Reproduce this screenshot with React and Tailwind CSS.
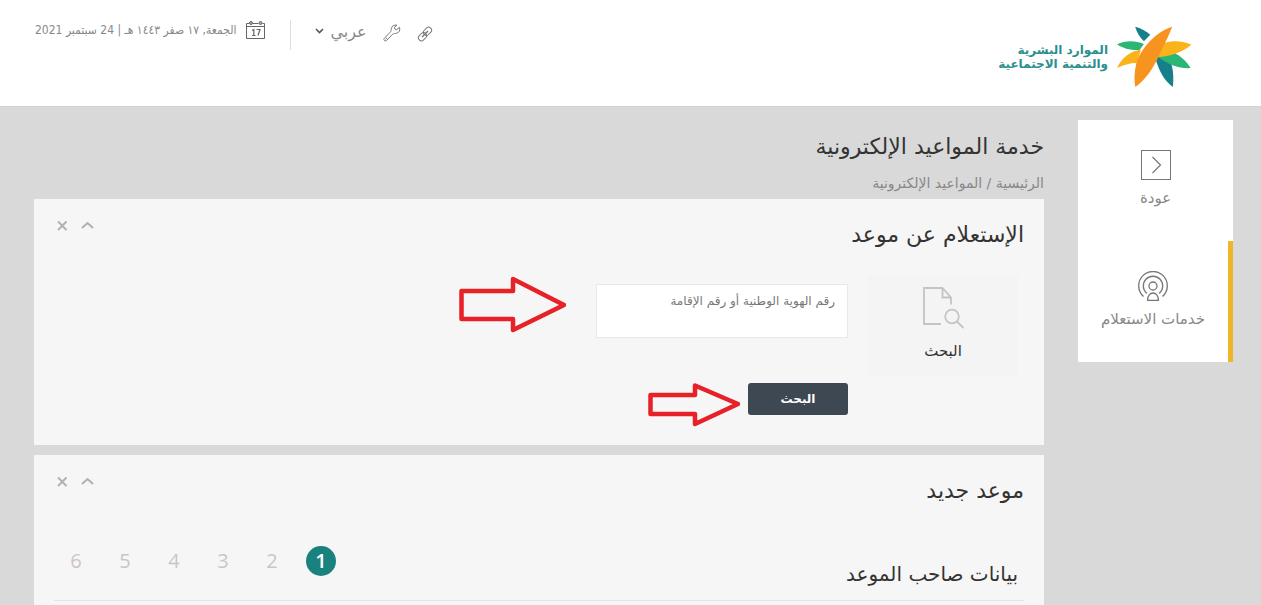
import { useState } from 'react';

const steps = [1, 2, 3, 4, 5, 6];

function Logo() {
	return (
		<a
			href="#home"
			className="flex items-center gap-2 text-xs leading-[14px] font-bold text-[#2b8f8f]"
		>
			<svg viewBox="14 12 226 184" className="h-[62px] w-[76px]" aria-hidden="true">
				<path d="M71 14C88 18 104 27 116 38L97 57C85 46 76 31 71 14Z" fill="#16808a" />
				<path d="M160 88C180 112 188 150 183 193C158 176 142 146 131 108Z" fill="#16808a" />
				<path d="M17 66C42 54 72 55 97 65L84 83C58 84 35 79 17 66Z" fill="#2cb673" />
				<path d="M172 86C200 94 222 114 236 137C202 139 168 126 138 103Z" fill="#2cb673" />
				<path d="M17 137C30 108 55 87 88 82L76 122C54 122 35 128 17 137Z" fill="#fbb31c" />
				<path d="M238 67C212 55 182 54 156 62L130 105C172 103 212 92 238 67Z" fill="#fbb31c" />
				<path d="M181 14C136 28 84 78 73 130C68 155 68 178 72 193C102 172 126 136 141 102C156 68 171 42 181 14Z" fill="#f7941f" />
			</svg>
			<span>
				الموارد البشرية
				<br />
				والتنمية الاجتماعية
			</span>
		</a>
	);
}

function CalendarIcon() {
	return (
		<svg viewBox="0 0 20 20" className="h-5 w-5" fill="none" stroke="#666" aria-hidden="true">
			<path d="M3 3.500H.5V18.500H18.500V3.500H16.500M7 3.500H12.500M.5 6.500H18.500" />
			<circle cx="5" cy="3" r="1.500" fill="#aaa" />
			<circle cx="14.500" cy="3" r="1.500" fill="#aaa" />
			<path d="M6 10.500L7.800 9.500V15.500M6 15.500H9.500M10.500 9.500H14L12 15.500" strokeWidth="1.200" />
		</svg>
	);
}

function WrenchIcon() {
	return (
		<svg viewBox="0 0 18 18" className="h-[18px] w-[18px]" fill="none" stroke="#777" strokeLinejoin="round" aria-hidden="true">
			<path d="M16.500 3.300L13.500 5.800L11.800 5L11.500 3.300L14 1.200C11.500.6 8.600 1.900 8.300 4.600C8.200 6.400 8.200 7 7.200 8.200L1.200 14.500C.1 15.800 1.900 17.800 3.300 16.700L9.500 10.300C10.700 9.300 12 9.600 13.500 9.300C16.200 8.600 17.400 6 16.500 3.300Z" />
			<path d="M2.700 15.200L4 13.900" />
		</svg>
	);
}

function LinkIcon() {
	return (
		<svg viewBox="0 0 16 16" className="h-4 w-4" fill="none" stroke="#777" aria-hidden="true">
			<rect x="6" y="2.300" width="9" height="6" rx="3" transform="rotate(-45 10.500 5.300)" />
			<rect x="1" y="7.700" width="9" height="6" rx="3" transform="rotate(-45 5.500 10.700)" />
			<path d="M5 11L11 5" strokeWidth="1.500" />
		</svg>
	);
}

function BackIcon() {
	return (
		<svg viewBox="0 0 30 30" className="h-[30px] w-[30px]" fill="none" stroke="#777" aria-hidden="true">
			<rect x=".5" y=".5" width="29" height="29" />
			<path d="M11.500 7L19.500 15L11.500 23" strokeWidth="1.200" />
		</svg>
	);
}

function InquiryIcon() {
	return (
		<svg viewBox="0 0 30 30" className="h-[30px] w-[30px]" fill="none" stroke="#777" strokeWidth="1.300" aria-hidden="true">
			<path d="M5.500 25.500A14.300 14.300 0 1 1 24.500 25.500" />
			<path d="M8.800 22.400A9.700 9.700 0 1 1 21.200 22.400" />
			<circle cx="15" cy="15" r="4" />
			<path d="M9.500 29.400C9.500 19.500 20.500 19.500 20.500 29.400Z" />
		</svg>
	);
}

function FileSearchIcon() {
	return (
		<svg viewBox="0 0 42 42" className="h-[42px] w-[42px]" fill="none" stroke="#c4c4c4" strokeWidth="1.800" aria-hidden="true">
			<path d="M19 37H2V1H20.500L29 10.500V17.500M20.500 1V10.500H29" />
			<circle cx="30" cy="29.500" r="6.800" />
			<path d="M35 34.500L41.500 41" />
		</svg>
	);
}

function SideLink({ icon, label, active }) {
	return (
		<a
			href="#services"
			className={`flex h-[121px] flex-col items-center pt-[30px] text-[15px] leading-5 text-[#888] ${
				active ? 'border-r-[5px] border-[#f0b62a]' : ''
			}`}
		>
			{icon}
			<span className="mt-2">{label}</span>
		</a>
	);
}

function Panel({ title, className, children }) {
	const [open, setOpen] = useState(true);

	return (
		<section className={`bg-[#f6f6f6] px-5 pt-5 ${className}`}>
			<div className="flex items-start justify-between">
				<h2 className="text-[22px] leading-8 text-[#333]">{title}</h2>
				<div className="flex gap-3 text-[#b0b0b0]">
					<button type="button" aria-label="طي" onClick={() => setOpen(!open)}>
						<svg viewBox="0 0 14 14" className="h-3.5 w-3.5" fill="none" stroke="currentColor" strokeWidth="2" aria-hidden="true">
							<path d="M2 9L7.500 4L13 9" />
						</svg>
					</button>
					<button type="button" aria-label="إغلاق">
						<svg viewBox="0 0 14 14" className="h-3.5 w-3.5" fill="none" stroke="currentColor" strokeWidth="1.800" aria-hidden="true">
							<path d="M4 2.500L12.500 11M12.500 2.500L4 11" />
						</svg>
					</button>
				</div>
			</div>
			{open && children}
		</section>
	);
}

function App() {
	const [step, setStep] = useState(1);

	return (
		<div
			dir="rtl"
			className="flex min-h-screen flex-col bg-[#d9d9d9] font-['DejaVu_Sans',sans-serif]"
		>
			<header className="flex items-start justify-between border-b border-[#d2d2d2] bg-white pt-5 pr-[69px] pb-[18px] pl-[35px]">
				<div className="pt-1.5">
					<Logo />
				</div>
				<div className="flex items-start text-[#888]">
					<button type="button" aria-label="روابط" className="mt-1.5 ml-4">
						<LinkIcon />
					</button>
					<button type="button" aria-label="أدوات" className="mt-1 ml-4">
						<WrenchIcon />
					</button>
					<button type="button" className="flex items-start gap-1.5 text-base leading-6">
						عربي
						<svg viewBox="0 0 9 6" className="mt-2 h-1.5 w-[9px]" fill="none" stroke="#555" strokeWidth="1.600" aria-hidden="true">
							<path d="M1 1L4.500 4.500L8 1" />
						</svg>
					</button>
					<span className="mx-6 h-[30px] w-px bg-[#ddd]" />
					<span className="flex items-center gap-2.5 font-['DejaVu_Sans_Condensed','DejaVu_Sans',sans-serif] text-xs">
						<CalendarIcon />
						الجمعة, ١٧ صفر ١٤٤٣ هـ | 24 سبتمبر 2021
					</span>
				</div>
			</header>

			<div className="flex grow items-stretch gap-[34px] pr-7 pl-[34px]">
				<nav className="mt-[13px] w-[155px] shrink-0 self-start bg-white">
					<SideLink icon={<BackIcon />} label="عودة" />
					<SideLink icon={<InquiryIcon />} label="خدمات الاستعلام" active />
				</nav>

				<main className="flex min-w-0 grow flex-col pt-6">
					<h1 className="text-[22px] leading-8 text-[#333]">خدمة المواعيد الإلكترونية</h1>
					<div className="mt-2.5 mb-1.5 text-sm leading-5 text-[#888]">
						<a href="#home">الرئيسية</a> / <a href="#appointments">المواعيد الإلكترونية</a>
					</div>

					<Panel title="الإستعلام عن موعد" className="pb-[17px]">
						<div className="mt-6 flex gap-5 pr-1.5">
							<div className="flex h-[100px] w-[150px] flex-col items-center bg-[#f4f4f4] pt-3 text-[15px] leading-5 text-[#333]">
								<FileSearchIcon />
								<span className="mt-3">البحث</span>
							</div>
							<form className="pt-[9px]" onSubmit={(e) => e.preventDefault()}>
								<div className="flex items-start gap-[30px]">
									<div className="flex h-[54px] w-[252px] flex-col border border-[#e8e8e8] bg-white px-3 pt-1.5">
										<label htmlFor="identity" className="text-xs leading-5 text-[#777]">
											رقم الهوية الوطنية أو رقم الإقامة
										</label>
										<input id="identity" type="text" className="h-5 w-full text-sm outline-none" />
									</div>
									<svg viewBox="0 0 108 58" className="-mt-2 h-[58px] w-[108px]" fill="none" stroke="#e82027" strokeWidth="4.500" strokeLinejoin="round" aria-hidden="true">
										<path d="M3.500 15H55V3L106 29L55 54V43H3.500Z" />
									</svg>
								</div>
								<div className="mt-[45px] flex items-start gap-2">
									<button
										type="submit"
										className="h-8 w-[100px] rounded-[3px] bg-[#3d4852] text-xs font-bold text-white"
									>
										البحث
									</button>
									<svg viewBox="0 0 94 45" className="h-[45px] w-[94px]" fill="none" stroke="#e82027" strokeWidth="4.500" strokeLinejoin="round" aria-hidden="true">
										<path d="M4.500 12H49V2.500L92 21L49 41V31H4.500Z" />
									</svg>
								</div>
							</form>
						</div>
					</Panel>

					<Panel title="موعد جديد" className="mt-2.5 grow">
						<div className="mt-[39px] flex items-start justify-between border-b border-[#e4e4e4] pr-1.5 pb-2.5">
							<h3 className="mt-3 text-xl leading-8 text-[#333]">بيانات صاحب الموعد</h3>
							<ol className="flex gap-[19px] pl-[7px] font-['Open_Sans','DejaVu_Sans',sans-serif] text-xl font-medium">
								{steps.map((n) => (
									<li key={n}>
										<button
											type="button"
											onClick={() => setStep(n)}
											className={`flex h-[30px] w-[30px] items-center justify-center rounded-full ${
												n === step ? 'bg-[#19827f] font-semibold text-white' : 'text-[#ccc5c5]'
											}`}
										>
											{n}
										</button>
									</li>
								))}
							</ol>
						</div>
					</Panel>
				</main>
			</div>
		</div>
	);
}

export default App;
